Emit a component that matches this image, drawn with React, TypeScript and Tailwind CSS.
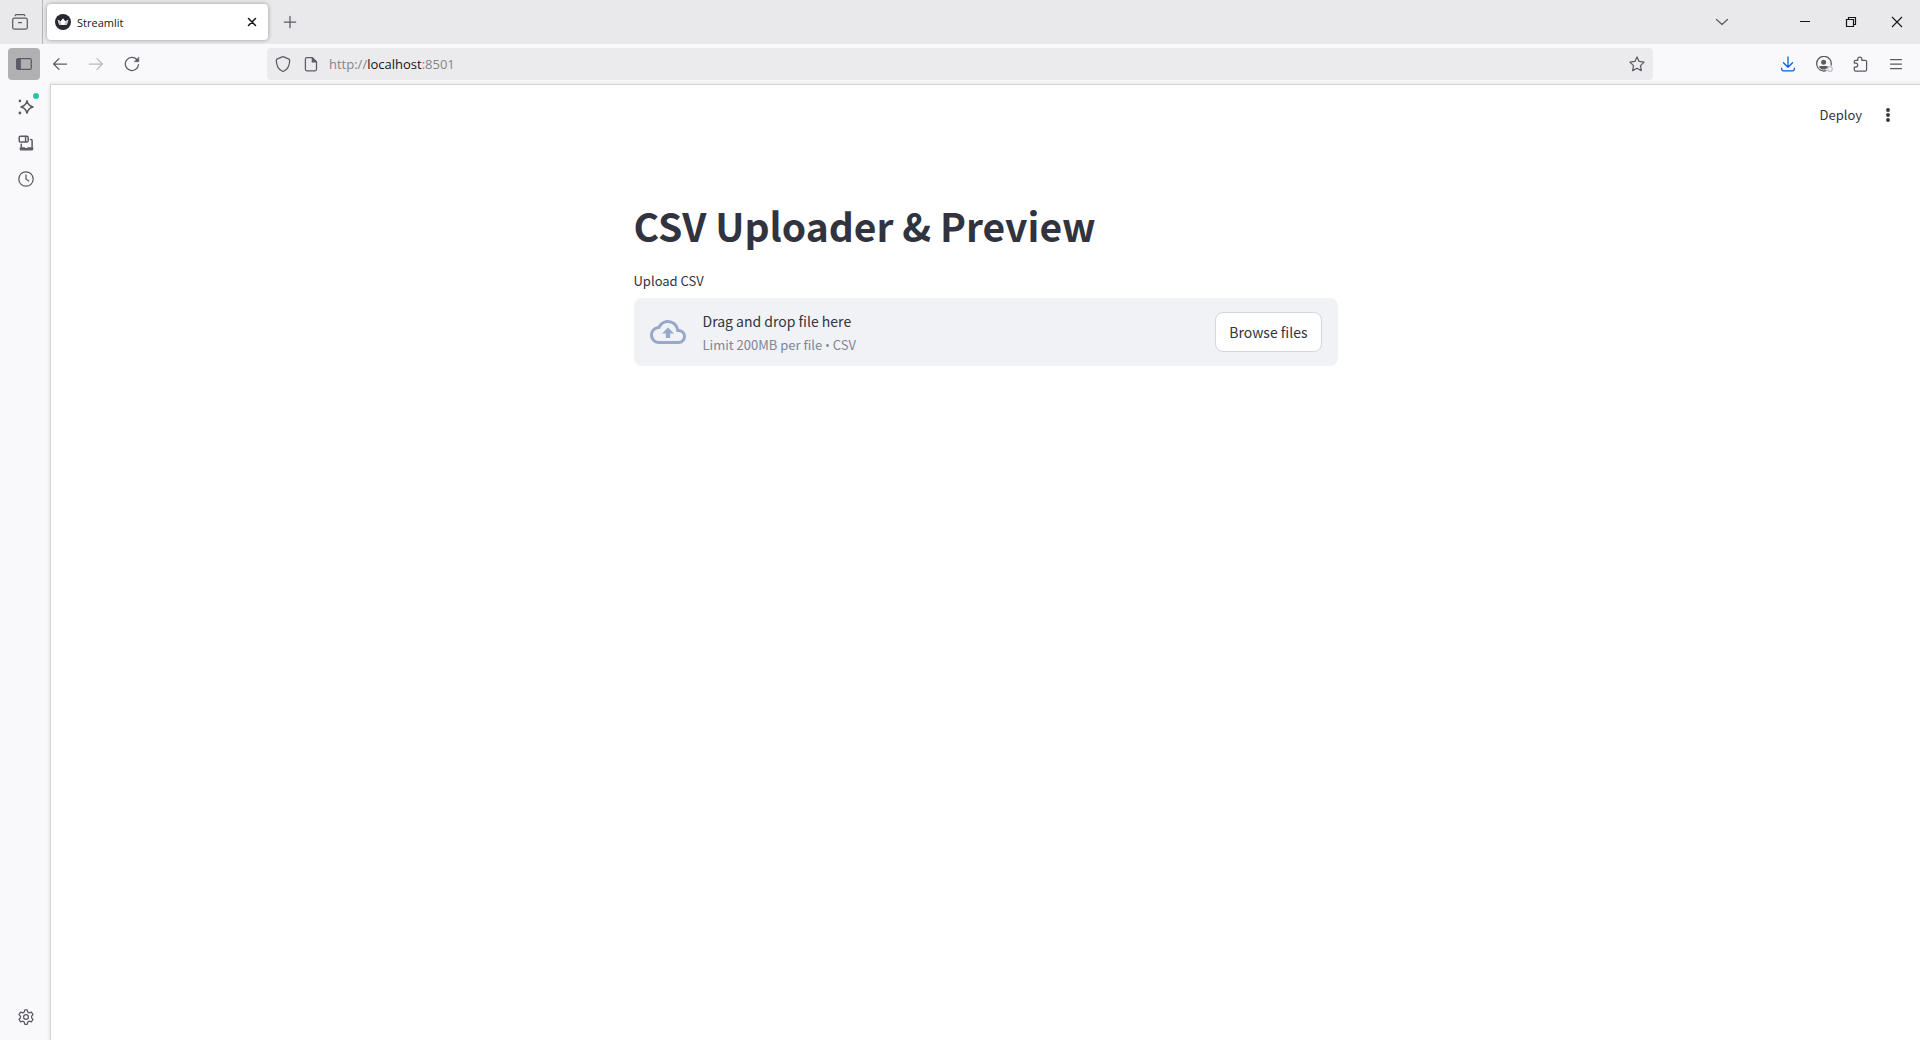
import { useId } from "react";
import type { ReactNode } from "react";

const appFont = "font-['Noto_Sans_CJK_SC','Noto_Sans',sans-serif]";

function Icon({ children, className = "size-4" }: { children: ReactNode; className?: string }) {
  return (
    <svg
      viewBox="0 0 16 16"
      className={`shrink-0 ${className}`}
      fill="none"
      stroke="currentColor"
      strokeWidth="1.25"
      strokeLinecap="round"
      strokeLinejoin="round"
      aria-hidden="true"
    >
      {children}
    </svg>
  );
}

function ToolButton({ label, children, className = "" }: { label: string; children: ReactNode; className?: string }) {
  return (
    <button
      type="button"
      aria-label={label}
      className={`flex size-8 shrink-0 items-center justify-center rounded text-[#5b5b66] ${className}`}
    >
      {children}
    </button>
  );
}

function WindowButton({ label, children }: { label: string; children: ReactNode }) {
  return (
    <button type="button" aria-label={label} className="flex h-11 w-[46px] items-center justify-center text-[#15141a]">
      {children}
    </button>
  );
}

function TabStrip() {
  return (
    <header className="flex h-11 shrink-0 items-center bg-[#e9e9eb]">
      <div className="flex h-11 w-[43px] shrink-0 items-center border-r border-[#b4b4b8] pl-1">
        <ToolButton label="Firefox View">
          <Icon>
            <path d="M3.2 1.600c.2-.6.6-.9 1.200-.9h7.200c.6 0 1 .3 1.200.9" />
            <rect x=".7" y="4.200" width="14.600" height="11" rx="1.800" />
            <path d="M6.500 8.500h3" />
          </Icon>
        </ToolButton>
      </div>
      <div
        role="tab"
        aria-selected="true"
        className="ml-1 flex h-9 w-[221px] items-center rounded bg-white pr-1 pl-2 shadow-[0_0_4px_rgba(0,0,0,0.35)]"
      >
        <svg viewBox="0 0 16 16" className="size-4 shrink-0" aria-hidden="true">
          <circle cx="8" cy="8" r="8" fill="#262730" />
          <path d="M2.6 5.7 5.7 7.2 8 4.3l2.3 2.9 3.1-1.5-1.5 4.8c-.1.3-.3.5-.6.5H4.7c-.3 0-.5-.2-.6-.5z" fill="#fff" />
          <path d="m2.6 5.7 3.1 1.5L6.6 11H4.7c-.3 0-.5-.2-.6-.5zM13.4 5.7l-3.1 1.500L9.4 11h1.9c.3 0 .5-.2.6-.5z" fill="#c9c9cc" />
        </svg>
        <span className="ml-1.5 flex-1 pt-0.5 text-[11px] text-[#15141a]">Streamlit</span>
        <button type="button" aria-label="Close tab" className="flex size-6 items-center justify-center text-[#15141a]">
          <Icon>
            <path d="m4.500 4.500 7 7m0-7-7 7" strokeWidth="1.500" />
          </Icon>
        </button>
      </div>
      <ToolButton label="New tab" className="ml-1.5">
        <Icon>
          <path d="M8 2.300v11.400M2.300 8h11.400" />
        </Icon>
      </ToolButton>
      <div className="ml-auto flex items-center">
        <ToolButton label="List all tabs" className="mr-11">
          <Icon>
            <path d="m2.500 5.500 5.500 5 5.500-5" />
          </Icon>
        </ToolButton>
        <WindowButton label="Minimize">
          <Icon>
            <path d="M3 7.500h10" strokeWidth="1" strokeLinecap="butt" />
          </Icon>
        </WindowButton>
        <WindowButton label="Restore">
          <Icon>
            <path d="M3.500 5.500h7v7h-7zM5.500 5.500v-2h7v7h-2" strokeWidth="1.200" strokeLinejoin="miter" />
          </Icon>
        </WindowButton>
        <WindowButton label="Close window">
          <Icon>
            <path d="m3 3 10 10m0-10L3 13" strokeWidth="1.100" strokeLinecap="butt" />
          </Icon>
        </WindowButton>
      </div>
    </header>
  );
}

function NavBar() {
  return (
    <nav aria-label="Navigation" className="flex h-10 shrink-0 items-center gap-1 bg-[#f9f9fb] px-2">
      <ToolButton label="Sidebars" className="bg-[#b1b1b4]">
        <Icon>
          <rect x=".7" y="2.700" width="14.600" height="10.600" rx="1.600" />
          <path d="M1 3h3.600v10H1z" fill="currentColor" strokeWidth=".6" />
        </Icon>
      </ToolButton>
      <ToolButton label="Back">
        <Icon>
          <path d="M14.600 8H1.600M7 2.600 1.600 8 7 13.400" />
        </Icon>
      </ToolButton>
      <ToolButton label="Forward" className="opacity-40">
        <Icon>
          <path d="M1.400 8h13M9 2.600 14.400 8 9 13.400" />
        </Icon>
      </ToolButton>
      <ToolButton label="Reload">
        <Icon>
          <path d="M14.500 8.600A6.600 6.600 0 1 1 12.800 3.500" />
          <path d="M14.800 1.400v4.300h-4.300z" fill="currentColor" strokeWidth=".6" />
        </Icon>
      </ToolButton>
      <form
        className="mx-[115px] flex h-8 flex-1 items-center rounded bg-[#ebebed] text-[#5b5b66]"
        onSubmit={(event) => event.preventDefault()}
      >
        <ToolButton label="Tracking protection">
          <Icon>
            <path d="M8 .7c.3 0 .5.1.8.2L14 3.1c.4.2.7.6.7 1.100-.1 4.600-1.800 9.100-6.100 11-.4.2-.8.2-1.200 0-4.300-1.900-6-6.400-6.100-11 0-.5.3-.9.7-1.100L7.200.9c.3-.1.500-.2.800-.2z" />
          </Icon>
        </ToolButton>
        <ToolButton label="Site information" className="-ml-1">
          <Icon>
            <path d="M3.900 1.700h5.400l4.200 4.200v7.400c0 .9-.6 1.500-1.500 1.500H3.900c-.9 0-1.500-.6-1.500-1.500V3.200c0-.9.6-1.500 1.500-1.500z" />
            <path d="M9.300 1.900v4h4z" fill="currentColor" />
          </Icon>
        </ToolButton>
        <a href="http://localhost:8501" className="ml-0.5 flex-1 pt-0.5 text-[13px] text-[#84848a]">
          http://<span className="text-[#15141a]">localhost</span>:8501
        </a>
        <ToolButton label="Bookmark this page">
          <Icon>
            <path d="m8 .9 2.100 4.500 5 .7-3.600 3.500.8 5L8 12.300l-4.300 2.300.8-5L.9 6.100l5-.7z" />
          </Icon>
        </ToolButton>
      </form>
      <ToolButton label="Downloads" className="text-[#0061e0]">
        <Icon>
          <path d="M8 .9v10M3.500 6.700 8 11.200l4.500-4.500M1.600 12.200v.9c0 1 .7 1.700 1.700 1.700h9.400c1 0 1.700-.7 1.700-1.700v-.9" />
        </Icon>
      </ToolButton>
      <ToolButton label="Account">
        <svg viewBox="0 0 18 16" className="h-4 w-[18px]" fill="none" stroke="currentColor" aria-hidden="true">
          <path d="M11.500 14.500A7.300 7.300 0 1 1 16 9.600" strokeWidth="1.300" />
          <circle cx="8.600" cy="6.200" r="2.500" fill="currentColor" stroke="none" />
          <path d="M4.400 10h8.200v1.200l-1.400 1.700c-1.600.8-3.700.8-5.300 0l-1.500-1.700z" fill="currentColor" stroke="none" />
          <circle cx="15" cy="13" r="2.300" stroke="#bdbdc2" strokeWidth="1.200" />
        </svg>
      </ToolButton>
      <ToolButton label="Extensions">
        <Icon>
          <path d="M5.800 4.300V3a2 2 0 0 1 4 0v1.300h3.500c.8 0 1.300.5 1.300 1.300v8.100c0 .8-.5 1.300-1.300 1.300H3.600c-.8 0-1.300-.5-1.300-1.300v-2.600h1.400a2 2 0 0 0 0-4H2.300V5.600c0-.8.5-1.300 1.300-1.300z" />
        </Icon>
      </ToolButton>
      <ToolButton label="Open application menu">
        <Icon>
          <path d="M2.500 3.500h11M2.500 8h11M2.500 12.500h11" />
        </Icon>
      </ToolButton>
    </nav>
  );
}

function SideBar() {
  return (
    <aside className="flex w-[50px] shrink-0 flex-col items-center gap-1 bg-[#f9f9fb] py-[7px] pl-0.5">
      <ToolButton label="AI chatbot" className="relative">
        <Icon>
          <path d="M9 1.900c.7 3.500 2 4.900 6 6-4 1.100-5.300 2.500-6 6.300-.7-3.800-2-5.200-6-6.300 4-1.100 5.300-2.500 6-6z" strokeWidth="1.600" />
          <circle cx="1.900" cy="1.900" r="1.300" fill="currentColor" stroke="none" />
          <circle cx="1.900" cy="14" r="1.400" fill="currentColor" stroke="none" />
        </Icon>
        <span className="absolute top-0.5 right-[3px] size-1.5 rounded-full bg-[#2ac3a2]" />
      </ToolButton>
      <ToolButton label="Tabs from other devices">
        <Icon>
          <rect x="1.200" y="1.200" width="9" height="5.800" rx="1.300" strokeWidth="1.500" />
          <path d="M7.600 1.500v5.200M3.300 9.200v2.800M12.600 4.400h.2c.8 0 1.300.5 1.300 1.200V12" strokeWidth="1.500" />
          <path d="M2.300 12.900h4.200l.7.700h2l.7-.7h4.800v1c0 .5-.4.900-.9.900H3.200c-.5 0-.9-.4-.9-.9z" fill="currentColor" />
        </Icon>
      </ToolButton>
      <ToolButton label="History">
        <Icon>
          <circle cx="8" cy="8" r="7.200" />
          <path d="M8 3.800V8l2.800 2" />
        </Icon>
      </ToolButton>
      <ToolButton label="Customize sidebar" className="mt-auto">
        <Icon>
          <path d="M6.800.8h2.400l.5 2.200 1.500.9 2.200-.7 1.600 2.400-1.400 1.600v1.700l1.400 1.600-1.600 2.400-2.200-.7-1.500.9-.5 2.200H6.800l-.5-2.200-1.500-.9-2.200.7L1 10.500l1.400-1.600V7.200L1 5.600l1.600-2.400 2.200.7L6.300 3z" />
          <circle cx="8" cy="8" r="2.400" />
        </Icon>
      </ToolButton>
    </aside>
  );
}

function Uploader() {
  const labelId = useId();
  return (
    <section aria-labelledby={labelId} className="mt-5">
      <p id={labelId} className="mb-[7px] text-[13px] leading-5">
        Upload CSV
      </p>
      <div className="flex items-center rounded-lg bg-[#f0f2f6] px-4 py-[13px]">
        <svg viewBox="0 0 24 24" className="mr-[17px] size-9 shrink-0" fill="#98a8c8" aria-hidden="true">
          <path d="M19.350 10.040A7.490 7.490 0 0 0 12 4C9.110 4 6.600 5.640 5.350 8.040A5.994 5.994 0 0 0 0 14c0 3.310 2.690 6 6 6h13c2.760 0 5-2.240 5-5 0-2.640-2.050-4.780-4.650-4.960zM19 18H6c-2.210 0-4-1.790-4-4 0-2.050 1.530-3.760 3.560-3.970l1.070-.11.5-.95A5.469 5.469 0 0 1 12 6c2.620 0 4.880 1.860 5.390 4.430l.3 1.500 1.530.11A2.980 2.980 0 0 1 22 15c0 1.650-1.350 3-3 3zM8 13h2.550v3h2.900v-3H16l-4-4-4 4z" />
        </svg>
        <div className="flex-1">
          <p className="mb-1.5 text-[14px] leading-5">Drag and drop file here</p>
          <p className="text-[13px] leading-4 text-[#838490]">
            Limit 200MB per file <span className="font-['Open_Sans',sans-serif]">•</span> CSV
          </p>
        </div>
        <button type="button" className="h-10 rounded-lg border border-[#d5d6da] bg-white px-[13px] text-[14px]">
          Browse files
        </button>
      </div>
    </section>
  );
}

function Page() {
  return (
    <div className={`flex flex-1 flex-col border-t border-l border-[#d3d3d8] bg-white text-[#31333f] shadow-[0_0_4px_rgba(0,0,0,0.12)] ${appFont}`}>
      <header className="flex h-15 items-center justify-end gap-0.5 pr-4">
        <button type="button" className="h-8 px-2 text-[13px]">
          Deploy
        </button>
        <button type="button" aria-label="Main menu" className="flex size-8 items-center justify-center">
          <svg viewBox="0 0 16 16" className="size-4" fill="currentColor" aria-hidden="true">
            <circle cx="8" cy="3" r="1.900" />
            <circle cx="8" cy="8" r="1.900" />
            <circle cx="8" cy="13" r="1.900" />
          </svg>
        </button>
      </header>
      <main className="mx-auto w-full max-w-[736px] px-4 pt-[54px]">
        <h1 className="text-[39px] leading-[52px] font-bold">CSV Uploader &amp; Preview</h1>
        <Uploader />
      </main>
    </div>
  );
}

export default function App() {
  return (
    <div className="flex min-h-screen flex-col bg-[#f9f9fb] font-['Open_Sans',sans-serif]">
      <TabStrip />
      <NavBar />
      <div className="flex flex-1">
        <SideBar />
        <Page />
      </div>
    </div>
  );
}
